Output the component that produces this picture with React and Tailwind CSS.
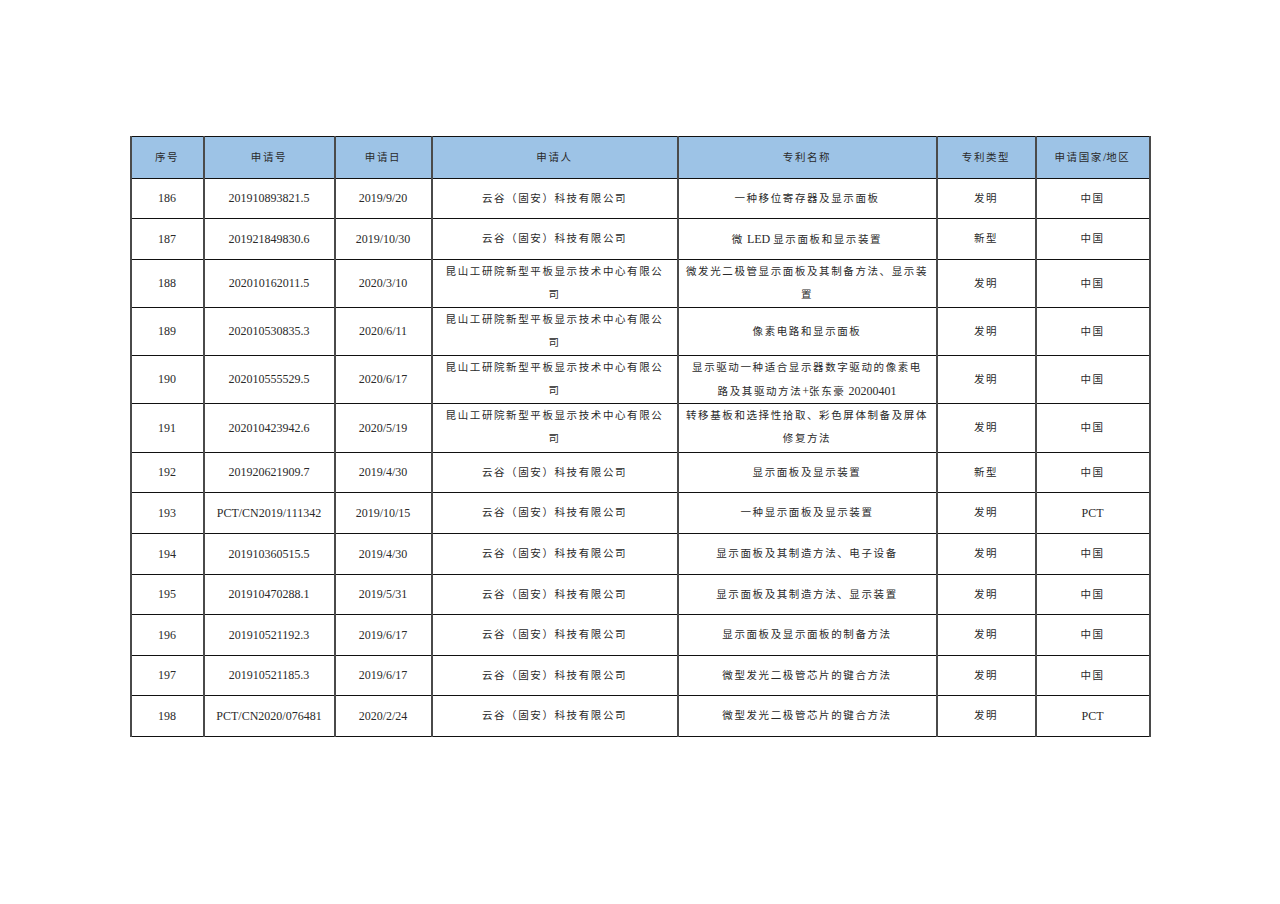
import React from 'react';

const COLS = [73, 131, 97, 246, 259, 99, 114];
const HEAD = ['序号', '申请号', '申请日', '申请人', '专利名称', '专利类型', '申请国家/地区'];

const ROWS = [
  { h: 40, c: ['186', '201910893821.5', '2019/9/20', '云谷（固安）科技有限公司', '一种移位寄存器及显示面板', '发明', '中国'] },
  { h: 41, c: ['187', '201921849830.6', '2019/10/30', '云谷（固安）科技有限公司', '微 LED 显示面板和显示装置', '新型', '中国'] },
  { h: 48, c: ['188', '202010162011.5', '2020/3/10', ['昆山工研院新型平板显示技术中心有限公', '司'], ['微发光二极管显示面板及其制备方法、显示装', '置'], '发明', '中国'] },
  { h: 48, c: ['189', '202010530835.3', '2020/6/11', ['昆山工研院新型平板显示技术中心有限公', '司'], '像素电路和显示面板', '发明', '中国'] },
  { h: 48, c: ['190', '202010555529.5', '2020/6/17', ['昆山工研院新型平板显示技术中心有限公', '司'], ['显示驱动一种适合显示器数字驱动的像素电', '路及其驱动方法+张东豪 20200401'], '发明', '中国'] },
  { h: 49, c: ['191', '202010423942.6', '2020/5/19', ['昆山工研院新型平板显示技术中心有限公', '司'], ['转移基板和选择性拾取、彩色屏体制备及屏体', '修复方法'], '发明', '中国'] },
  { h: 40, c: ['192', '201920621909.7', '2019/4/30', '云谷（固安）科技有限公司', '显示面板及显示装置', '新型', '中国'] },
  { h: 41, c: ['193', 'PCT/CN2019/111342', '2019/10/15', '云谷（固安）科技有限公司', '一种显示面板及显示装置', '发明', 'PCT'] },
  { h: 41, c: ['194', '201910360515.5', '2019/4/30', '云谷（固安）科技有限公司', '显示面板及其制造方法、电子设备', '发明', '中国'] },
  { h: 40, c: ['195', '201910470288.1', '2019/5/31', '云谷（固安）科技有限公司', '显示面板及其制造方法、显示装置', '发明', '中国'] },
  { h: 41, c: ['196', '201910521192.3', '2019/6/17', '云谷（固安）科技有限公司', '显示面板及显示面板的制备方法', '发明', '中国'] },
  { h: 40, c: ['197', '201910521185.3', '2019/6/17', '云谷（固安）科技有限公司', '微型发光二极管芯片的键合方法', '发明', '中国'] },
  { h: 41, c: ['198', 'PCT/CN2020/076481', '2020/2/24', '云谷（固安）科技有限公司', '微型发光二极管芯片的键合方法', '发明', 'PCT'] },
];

// split latin runs from CJK runs so only the CJK gets the wide spacing
const Text = ({ s }) => {
  const parts = s.split(/([\x20-\x7E]+)/).filter(Boolean);
  return parts.map((p, i) =>
    /^[\x20-\x7E]+$/.test(p) ? (
      <span key={i} className="text-[12px] tracking-normal">{p}</span>
    ) : (
      <span key={i} className="text-[10.5px] tracking-[1.6px]">{p}</span>
    )
  );
};

const Cell = ({ v }) => {
  if (Array.isArray(v)) {
    return (
      <div className="flex flex-col items-center text-[10px] leading-[22px]">
        {v.map((line, i) => (
          <div key={i} className="h-[23px] whitespace-nowrap"><Text s={line} /></div>
        ))}
      </div>
    );
  }
  return <div className="whitespace-nowrap text-[10px] leading-[20px]"><Text s={v} /></div>;
};

const App = () => {
  return (
    <div className="min-h-screen bg-white pt-[136px]" style={{ fontFamily: '"Liberation Serif", "Noto Sans CJK SC", serif' }}>
      <table className="mx-auto w-[1019px] table-fixed border-collapse text-[#2a2a2a]">
        <colgroup>
          {COLS.map((w, i) => <col key={i} style={{ width: w }} />)}
        </colgroup>
        <thead>
          <tr className="h-[42px] bg-[#9dc3e6]">
            {HEAD.map((h, i) => (
              <th key={i} className="border-x-2 border-x-[#4a4a4a] border-y border-y-[#111] p-0 text-center align-middle font-normal">
                <Cell v={h} />
              </th>
            ))}
          </tr>
        </thead>
        <tbody>
          {ROWS.map((r, ri) => (
            <tr key={ri} style={{ height: r.h }}>
              {r.c.map((v, ci) => (
                <td key={ci} className="border-x-2 border-x-[#4a4a4a] border-y border-y-[#111] p-0 text-center align-middle">
                  <Cell v={v} />
                </td>
              ))}
            </tr>
          ))}
        </tbody>
      </table>
    </div>
  );
};

export default App;
